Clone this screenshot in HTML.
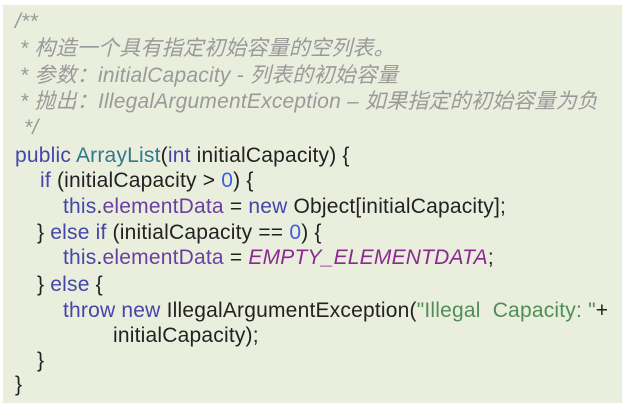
<!DOCTYPE html>
<html><head><style>
body{margin:0;background:#fff;width:627px;height:408px;overflow:hidden}
.box{position:absolute;left:3px;top:5px;width:619px;height:398px;background:#e9eedd}
.l{position:absolute;white-space:pre;font-family:"Liberation Sans","Noto Sans CJK SC",sans-serif;font-size:21px;letter-spacing:0.2px;color:#222;line-height:26px}
.c{color:#9a9a9a;font-style:italic}
.k{color:#4646a8}
.t{color:#2f7a8c}
.n{color:#3f5fe0}
.g{color:#4f8f55}
.p{color:#8a2a8f;font-style:italic}
.f{color:#6b3fa0}
</style></head><body>
<div class="box"></div>
<div class="l c" style="left:15px;top:9px">/**</div>
<div class="l c" style="left:20px;top:36px">* 构造一个具有指定初始容量的空列表。</div>
<div class="l c" style="left:20px;top:63px">* 参数：initialCapacity - 列表的初始容量</div>
<div class="l c" style="left:20px;top:89px">* 抛出：IllegalArgumentException – 如果指定的初始容量为负</div>
<div class="l c" style="left:24px;top:115px">*/</div>
<div class="l" style="left:15px;top:143px"><span class="k">public</span> <span class="t">ArrayList</span>(<span class="k">int</span> initialCapacity) {</div>
<div class="l" style="left:40px;top:168px"><span class="k">if</span> (initialCapacity &gt; <span class="n">0</span>) {</div>
<div class="l" style="left:63px;top:194px"><span class="k">this</span>.<span class="f">elementData</span> = <span class="k">new</span> Object[initialCapacity];</div>
<div class="l" style="left:37px;top:220px">} <span class="k">else if</span> (initialCapacity == <span class="n">0</span>) {</div>
<div class="l" style="left:63px;top:245px"><span class="k">this</span>.<span class="f">elementData</span> = <span class="p">EMPTY_ELEMENTDATA</span>;</div>
<div class="l" style="left:37px;top:272px">} <span class="k">else</span> {</div>
<div class="l" style="left:63px;top:298px"><span class="k">throw</span> <span class="k">new</span> IllegalArgumentException(<span class="g">"Illegal  Capacity: "</span>+</div>
<div class="l" style="left:113px;top:323px">initialCapacity);</div>
<div class="l" style="left:37px;top:348px">}</div>
<div class="l" style="left:15px;top:372px">}</div>
</body></html>
